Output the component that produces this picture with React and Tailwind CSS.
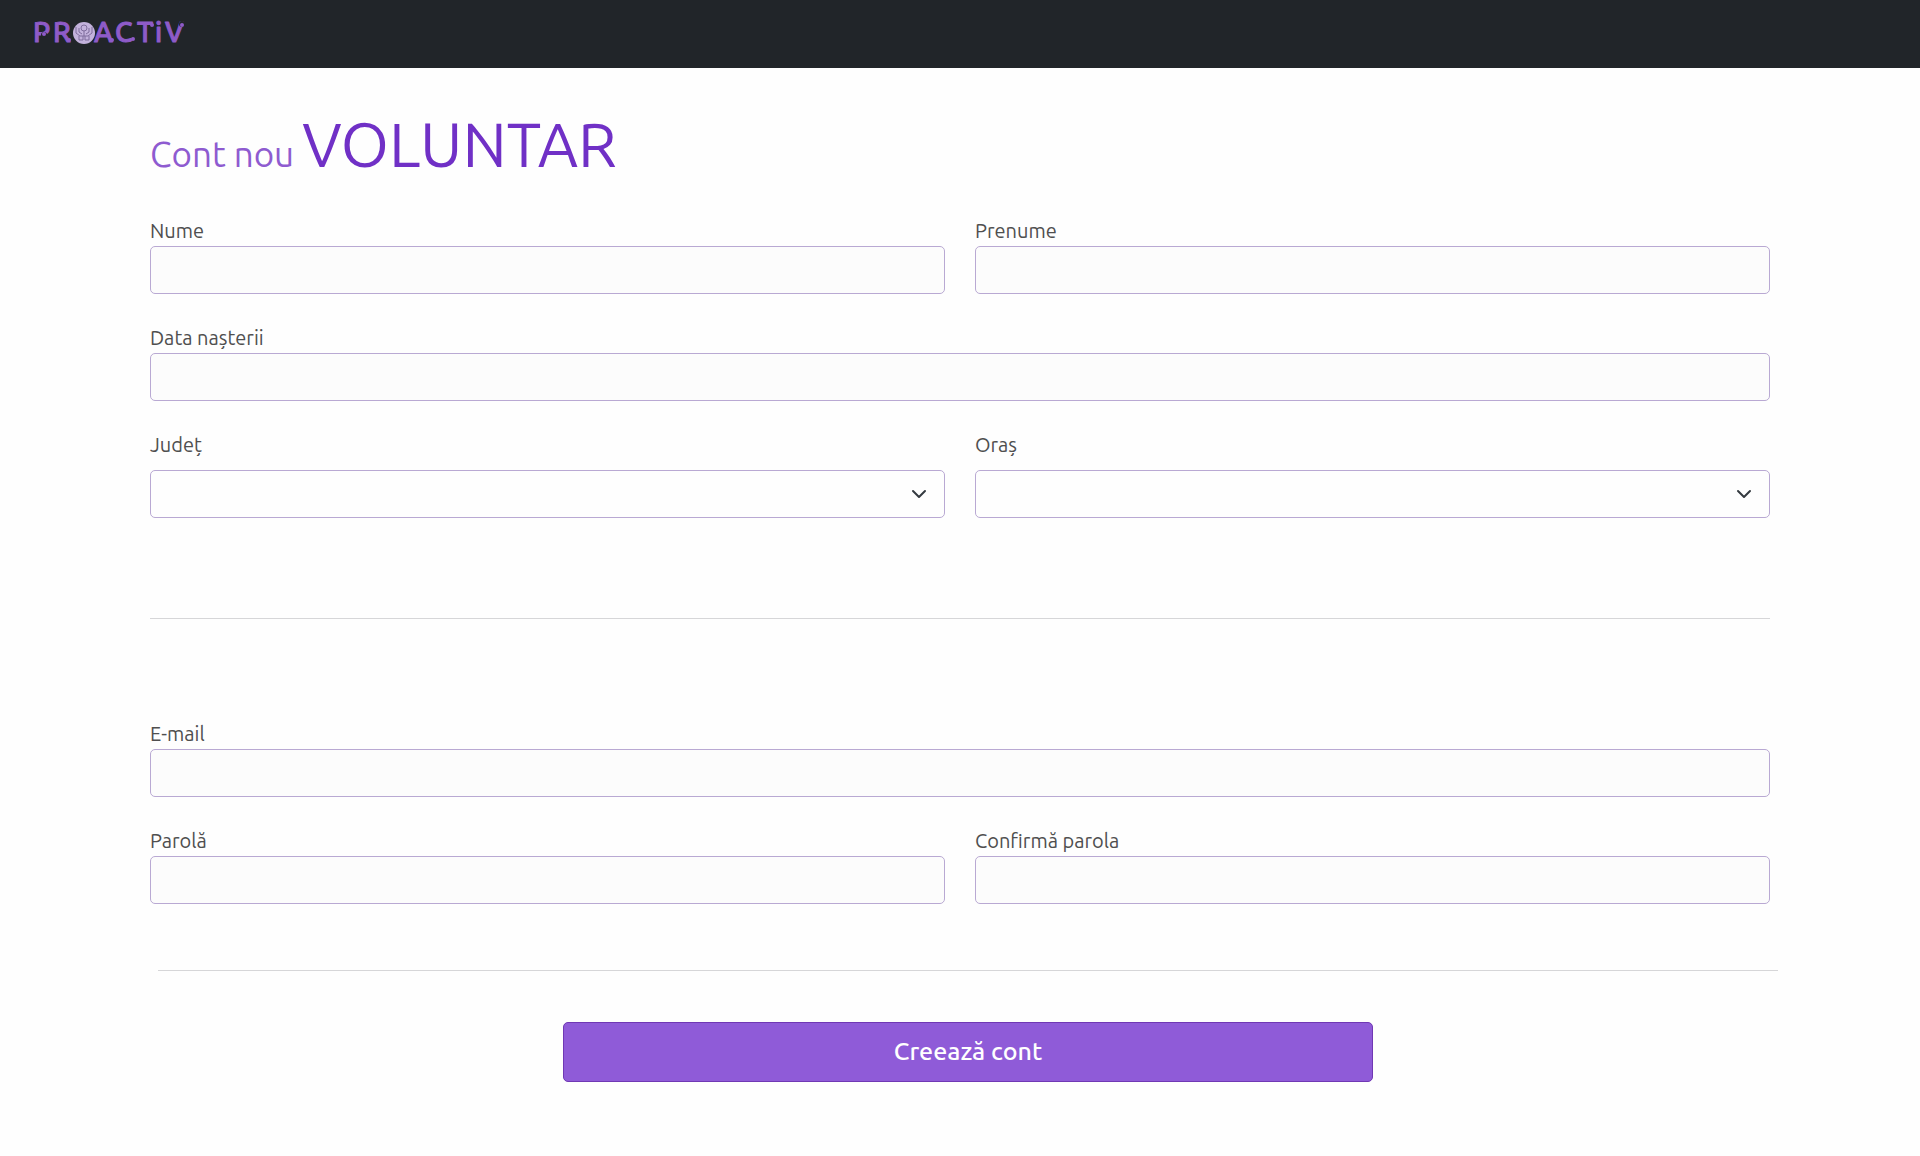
import React from "react";
import { ChevronDown } from "lucide-react";

const BODY_FONT = "font-['Ubuntu','Noto_Sans',sans-serif]";

function Logo() {
  return (
    <svg viewBox="-4 -8 160 40" className="h-10 w-40" role="img" aria-label="PROACTiV">
      <g
        fill="#8e5bc8"
        stroke="#8e5bc8"
        strokeWidth="1"
        strokeLinejoin="round"
        fontFamily="Ubuntu, Lato, sans-serif"
        fontWeight="500"
        fontSize="28"
      >
        <text x="-1" y="21">P</text>
        <text x="19" y="21">R</text>
        <text x="60" y="21">A</text>
        <text x="81" y="21">C</text>
        <text x="103" y="21">T</text>
        <text x="121" y="21">i</text>
        <text x="131" y="21">V</text>
      </g>
      <g fill="#212529">
        <circle cx="10" cy="14" r="3" />
        <circle cx="148" cy="3" r="3" />
      </g>
      <g fill="#8e5bc8">
        <circle cx="10" cy="13" r="2" />
        <circle cx="35" cy="19" r="2" />
        <circle cx="78" cy="19" r="2" />
        <circle cx="99" cy="18" r="2" />
        <circle cx="118" cy="4" r="2" />
        <circle cx="148" cy="4" r="2" />
      </g>
      <circle cx="50" cy="12" r="11" fill="#c3b2dc" />
      <g fill="none" stroke="#7f6d9c" strokeWidth="1">
        <circle cx="50" cy="7" r="3" />
        <path d="M42 6v6l4 3h8l4-3V6M45 7v4l3 2M55 7v4l-3 2M45 15v4h4v-4M51 15v4h4v-4M50 10v5" />
      </g>
    </svg>
  );
}

function Field({ id, label, type = "text" }) {
  return (
    <div className="flex flex-col">
      <label htmlFor={id} className="text-xl leading-[30px]">{label}</label>
      <input
        id={id}
        name={id}
        type={type}
        className="h-12 w-full rounded-[5px] border border-[#b9a9d3] bg-[#fcfcfc] px-3 outline-none focus:border-[#7030c6]"
      />
    </div>
  );
}

function SelectField({ id, label }) {
  return (
    <div className="flex flex-col gap-[10px]">
      <label htmlFor={id} className="text-xl leading-[30px]">{label}</label>
      <div className="relative">
        <select
          id={id}
          name={id}
          className="block h-12 w-full appearance-none rounded-[5px] border border-[#b9a9d3] bg-[#fefefe] px-3 outline-none focus:border-[#7030c6]"
        >
          <option value=""></option>
        </select>
        <ChevronDown
          size={24}
          strokeWidth={2}
          className="pointer-events-none absolute top-3 right-[14px] text-[#343a40]"
        />
      </div>
    </div>
  );
}

export default function App() {
  return (
    <div className={`min-h-screen bg-[#fefefe] text-[#4f4f4f] ${BODY_FONT}`}>
      <header className="flex h-17 items-center bg-[#212529] px-[30px] pb-0.5">
        <a href="#"><Logo /></a>
      </header>
      <main className="px-[150px] pt-[38px] pb-16">
        <h1 className="text-[35px] leading-[76px] text-[#8e5bd0]">
          Cont nou <span className="text-[62px] text-[#7030c6]">VOLUNTAR</span>
        </h1>
        <form className="mt-6">
          <div className="flex flex-col gap-[29px]">
            <div className="grid grid-cols-2 gap-[30px]">
              <Field id="nume" label="Nume" />
              <Field id="prenume" label="Prenume" />
            </div>
            <Field id="data" label="Data nașterii" />
            <div className="grid grid-cols-2 gap-[30px]">
              <SelectField id="judet" label="Județ" />
              <SelectField id="oras" label="Oraș" />
            </div>
          </div>
          <hr className="my-[100px] border-[#d6d6d8]" />
          <div className="flex flex-col gap-[29px]">
            <Field id="email" label="E-mail" type="email" />
            <div className="grid grid-cols-2 gap-[30px]">
              <Field id="parola" label="Parolă" type="password" />
              <Field id="confirma" label="Confirmă parola" type="password" />
            </div>
          </div>
          <div className="-mr-2 ml-2 mt-[66px] flex flex-col items-center gap-[51px]">
            <hr className="w-full border-[#d6d6d8]" />
            <button
              type="submit"
              className="h-15 w-1/2 rounded-[5px] border border-[#7038b4] bg-[#8f5bd8] text-[25px] font-medium text-white"
            >
              Creează cont
            </button>
          </div>
        </form>
      </main>
    </div>
  );
}
